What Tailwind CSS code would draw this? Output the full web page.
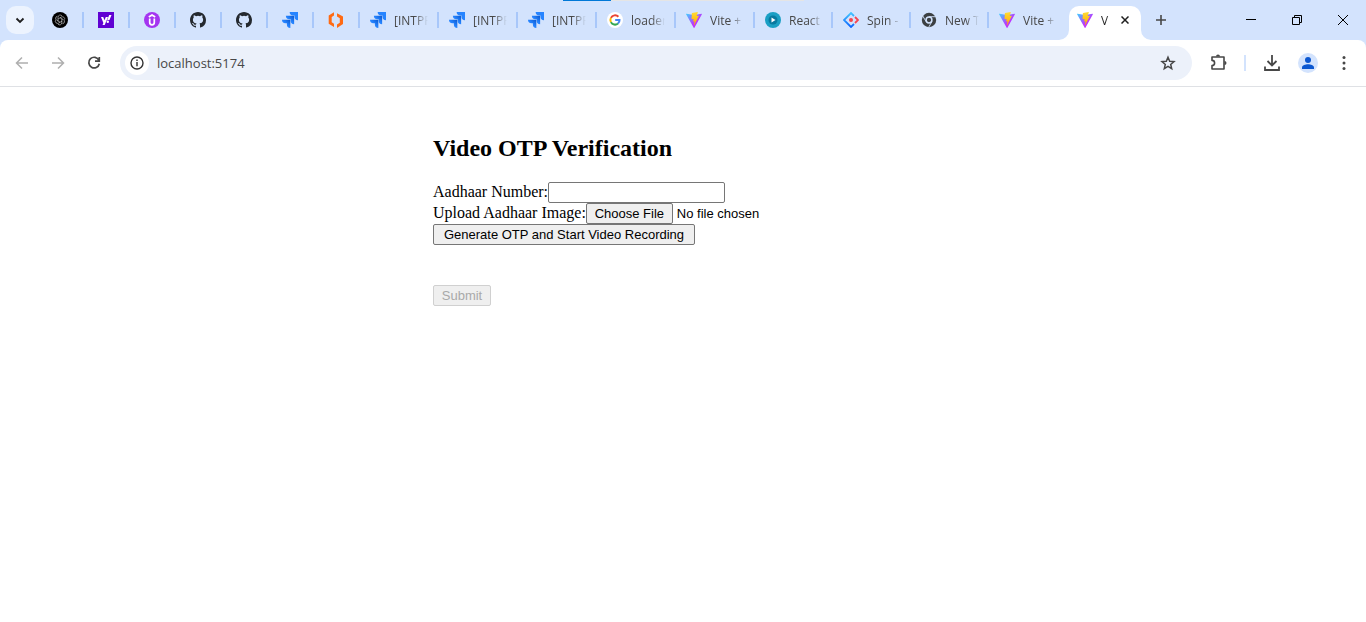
<!DOCTYPE html>
<html lang="en">
<head>
<meta charset="utf-8">
<meta name="viewport" content="width=device-width, initial-scale=1">
<title>Vite + React</title>
<script src="https://cdn.jsdelivr.net/npm/@tailwindcss/browser@4"></script>
</head>
<body class="min-h-screen bg-white font-['Liberation_Serif',serif] text-black">
<svg class="absolute size-0" aria-hidden="true">
  <defs>
    <linearGradient id="viteA" x1="0" y1="0" x2="1" y2="1"><stop offset="0" stop-color="#41d1ff"/><stop offset=".6" stop-color="#bd34fe"/></linearGradient>
    <linearGradient id="viteB" x1="0" y1="0" x2="0" y2="1"><stop offset="0" stop-color="#ffdd35"/><stop offset="1" stop-color="#ffa800"/></linearGradient>
    <linearGradient id="jiraA" x1="1" y1="0" x2="0" y2="1"><stop offset=".1" stop-color="#0f5fd6"/><stop offset=".5" stop-color="#2684ff"/></linearGradient>
    <linearGradient id="spinA" x1="0" y1="0" x2="0" y2="1"><stop offset="0" stop-color="#42c4ff"/><stop offset="1" stop-color="#0b63ff"/></linearGradient>
  </defs>
  <symbol id="vite" viewBox="0 0 256 257"><path fill="url(#viteA)" d="M255.200 38 134.900 252.900c-2.500 4.400-8.900 4.500-11.400 0L.9 38c-2.800-4.800 1.400-10.700 6.800-9.700l120.400 21.500q1.200.2 2.300 0l117.900-21.500c5.400-1 9.600 4.900 6.900 9.700Z"/><path fill="url(#viteB)" d="M185.400.1 96.400 17.500a3.300 3.300 0 0 0-2.600 3l-5.500 92.500a3.300 3.300 0 0 0 4 3.400l24.800-5.700a3.300 3.300 0 0 1 3.900 3.800l-7.300 36.100a3.300 3.300 0 0 0 4.100 3.800l15.400-4.700a3.300 3.300 0 0 1 4.100 3.800l-11.700 56.700c-.8 3.500 4 5.500 5.900 2.500l1.300-2 72.600-144.900a3.300 3.300 0 0 0-3.500-4.600l-25.500 4.900a3.300 3.300 0 0 1-3.800-4.100L189.200 4a3.300 3.300 0 0 0-3.800-3.900Z"/></symbol>
  <symbol id="jira" viewBox="0 0 24 24"><path fill="#2684ff" d="M11.500 0H24v12.500a5.200 5.200 0 0 1-5.200-5.200V5.200h-2.100A5.200 5.200 0 0 1 11.500 0Z"/><path fill="url(#jiraA)" d="M5.800 5.800h12.400v12.400a5.200 5.200 0 0 1-5.200-5.200v-2h-2a5.200 5.200 0 0 1-5.200-5.200Z"/><path fill="url(#jiraA)" d="M0 11.500h12.500V24a5.200 5.200 0 0 1-5.200-5.200v-2.100H5.200A5.200 5.200 0 0 1 0 11.500Z"/></symbol>
  <symbol id="github" viewBox="0 0 16 16"><path fill="#24292f" d="M8 0C3.580 0 0 3.580 0 8c0 3.540 2.290 6.530 5.470 7.590.4.070.550-.170.550-.380 0-.190-.010-.820-.010-1.490-2.010.370-2.530-.490-2.690-.940-.090-.230-.480-.940-.820-1.130-.280-.150-.680-.520-.010-.530.630-.010 1.080.580 1.230.820.720 1.210 1.870.870 2.330.660.070-.520.280-.870.510-1.070-1.780-.2-3.640-.890-3.640-3.950 0-.870.310-1.590.820-2.150-.080-.2-.360-1.020.080-2.120 0 0 .670-.210 2.200.820a7.600 7.600 0 0 1 4 0c1.530-1.040 2.200-.820 2.200-.820.440 1.100.160 1.920.080 2.120.510.560.820 1.270.820 2.150 0 3.070-1.870 3.750-3.650 3.950.290.250.540.730.540 1.480 0 1.070-.010 1.930-.010 2.200 0 .210.150.460.550.380A8 8 0 0 0 16 8c0-4.420-3.580-8-8-8Z"/></symbol>
</svg>

<header class="font-['Open_Sans','Noto_Sans',sans-serif]">
  <div class="relative bg-[#d3e3fd]">
    <div class="absolute top-0 left-[563px] flex h-px w-[241px]"><span class="w-12 bg-[#0078d7]"></span><span class="flex-1 bg-[#e5e5e5]"></span></div>
    <div class="flex h-10 items-center pl-1.5 text-xs text-[#474747]">
      <button aria-label="Search tabs" class="mr-1 grid size-7 shrink-0 place-items-center rounded-[10px] bg-[#ecf3fe]">
        <svg class="size-3" viewBox="0 0 12 12" fill="none" stroke="#1f1f1f" stroke-width="1.800"><path d="m2.500 4.500 3.500 3.500 3.500-3.500"/></svg>
      </button>
      <nav aria-label="Tabs" class="flex h-full shrink-0 items-center">
        <a href="#" aria-label="ChatGPT" class="flex h-4 w-[46px] border-r-2 border-[#a8c7fa] pl-3.5">
          <svg class="size-4" viewBox="0 0 16 16"><circle cx="8" cy="8" r="8" fill="#000"/><g fill="none" stroke="#d8d8d8" stroke-width=".6"><g id="petal"><path d="M6 9.200V5.300a2.200 2.200 0 0 1 4-1.300M6.200 6.900l3.300-1.900a2.200 2.200 0 0 1 3.100 2.600"/></g><use href="#petal" transform="rotate(120 8 8)"/><use href="#petal" transform="rotate(240 8 8)"/></g></svg>
        </a>
        <a href="#" aria-label="Yahoo" class="flex h-4 w-[46px] border-r-2 border-[#a8c7fa] pl-3.5">
          <svg class="size-4" viewBox="0 0 16 16"><path fill="#6001d2" d="M0 0h16v16H0z"/><path fill="#fff" d="M3 5h2.200l1.300 3.300L7.800 5H10l-3.300 8H4.500l.9-2.100ZM11.200 3h2.300l-2 4.900H9.200Z"/><circle cx="9.800" cy="9.800" r="1.200" fill="#fff"/></svg>
        </a>
        <a href="#" aria-label="Udemy" class="flex h-4 w-[46px] border-r-2 border-[#a8c7fa] pl-3.5">
          <svg class="size-4" viewBox="0 0 16 16"><circle cx="8" cy="8" r="8" fill="#a435f0"/><path d="m4.800 5 3.200-2 3.200 2M5.700 6.500V10.500a2.300 2.300 0 0 0 4.600 0V6.500" fill="none" stroke="#fff" stroke-width="1.700"/></svg>
        </a>
        <a href="#" aria-label="GitHub" class="flex h-4 w-[46px] border-r-2 border-[#a8c7fa] pl-3.5"><svg class="size-4"><use href="#github"/></svg></a>
        <a href="#" aria-label="GitHub" class="flex h-4 w-[46px] border-r-2 border-[#a8c7fa] pl-3.5"><svg class="size-4"><use href="#github"/></svg></a>
        <a href="#" aria-label="Jira" class="flex h-4 w-[46px] border-r-2 border-[#a8c7fa] pl-3.5"><svg class="size-4"><use href="#jira"/></svg></a>
        <a href="#" aria-label="Workspace" class="flex h-4 w-[46px] border-r-2 border-[#a8c7fa] pl-3.5">
          <svg class="size-4" viewBox="0 0 16 16" fill="#ff6a13"><path d="M6 .2v3.300L3.700 5v5.200l2.300 1.500v3.300L.7 11.700V3.400ZM9 1.200l6 3.300v7.600L9 16v-3.400l2.800-1.900V6.300L9 4.600Z"/></svg>
        </a>
        <a href="#" class="flex h-4 w-[79px] items-center gap-2 border-r-2 border-[#a8c7fa] pl-2.5"><svg class="size-4 shrink-0"><use href="#jira"/></svg><span class="w-[34px] overflow-hidden mask-r-from-60% pt-0.5 whitespace-nowrap">[INTPR</span></a>
        <a href="#" class="flex h-4 w-[79px] items-center gap-2 border-r-2 border-[#a8c7fa] pl-2.5"><svg class="size-4 shrink-0"><use href="#jira"/></svg><span class="w-[34px] overflow-hidden mask-r-from-60% pt-0.5 whitespace-nowrap">[INTPR</span></a>
        <a href="#" class="flex h-4 w-[79px] items-center gap-2 border-r-2 border-[#a8c7fa] pl-2.5"><svg class="size-4 shrink-0"><use href="#jira"/></svg><span class="w-[34px] overflow-hidden mask-r-from-60% pt-0.5 whitespace-nowrap">[INTPR</span></a>
        <a href="#" class="flex h-4 w-[79px] items-center gap-2 border-r-2 border-[#a8c7fa] pl-2.5">
          <svg class="size-4 shrink-0" viewBox="0 0 16 16"><circle cx="8" cy="8" r="8" fill="#fff"/><g fill="none" stroke-width="2"><path stroke="#ea4335" d="M3.900 5.900A4.600 4.600 0 0 1 11.400 4.800"/><path stroke="#fbbc05" d="M3.900 10.100a4.600 4.600 0 0 1 0-4.200"/><path stroke="#34a853" d="M3.900 10.100a4.600 4.600 0 0 0 7.100 1.400"/><path stroke="#4285f4" d="M11 11.500A4.300 4.300 0 0 0 12.500 8H8.200"/></g></svg>
          <span class="w-[34px] overflow-hidden mask-r-from-60% pt-0.5 whitespace-nowrap">loader</span></a>
        <a href="#" class="flex h-4 w-[79px] items-center gap-2 border-r-2 border-[#a8c7fa] pl-2.5"><svg class="size-4 shrink-0"><use href="#vite"/></svg><span class="w-[34px] overflow-hidden mask-r-from-60% pt-0.5 whitespace-nowrap">Vite +</span></a>
        <a href="#" class="flex h-4 w-[78px] items-center gap-2 border-r-2 border-[#a8c7fa] pl-2.5">
          <svg class="size-4 shrink-0" viewBox="0 0 16 16"><circle cx="8" cy="8" r="8" fill="#1a9fc4"/><circle cx="8" cy="8" r="4.500" fill="#08799f"/><path fill="#fff" d="m6.500 5.500 4 2.500-4 2.500Z"/></svg>
          <span class="w-[34px] overflow-hidden mask-r-from-60% pt-0.5 whitespace-nowrap">React</span></a>
        <a href="#" class="flex h-4 w-[78px] items-center gap-2 border-r-2 border-[#a8c7fa] pl-2.5">
          <svg class="size-4 shrink-0" viewBox="0 0 16 16" fill="none" stroke-width="1.800"><path stroke="url(#spinA)" d="M11 4 8 1 1 8l7 7 3-3"/><path stroke="#f5454f" d="m12 5 3 3-3 3"/><circle cx="8" cy="8" r="2" fill="#f5454f" stroke="none"/></svg>
          <span class="w-[34px] overflow-hidden mask-r-from-60% pt-0.5 whitespace-nowrap">Spin -</span></a>
        <a href="#" class="flex h-4 w-[78px] items-center gap-2 border-r-2 border-[#a8c7fa] pl-2.5">
          <svg class="size-4 shrink-0" viewBox="0 0 16 16"><circle cx="8" cy="8" r="7.200" fill="#3c4043"/><circle cx="8" cy="8" r="2.900" fill="#3c4043" stroke="#d3e3fd" stroke-width="1.500"/><path fill="none" stroke="#d3e3fd" stroke-width=".9" d="M8 4.700h7M5.100 9.600 1.600 3.700M10.900 9.600 7.500 15.500"/></svg>
          <span class="w-[34px] overflow-hidden mask-r-from-60% pt-0.5 whitespace-nowrap">New T</span></a>
        <a href="#" class="flex h-4 w-[78px] items-center gap-2 border-r-2 border-[#a8c7fa] pl-2.5 last:border-0"><svg class="size-4 shrink-0"><use href="#vite"/></svg><span class="w-[34px] overflow-hidden mask-r-from-60% pt-0.5 whitespace-nowrap">Vite +</span></a>
      </nav>
      <div class="flex h-full items-end">
        <svg class="-ml-2 size-2.5 shrink-0" viewBox="0 0 10 10"><path fill="#fff" d="M10 0v10H0A10 10 0 0 0 10 0Z"/></svg>
        <div class="flex h-[34px] w-[72px] items-center rounded-t-[10px] bg-white pb-1.5 pl-2 text-[#1f1f1f]">
          <svg class="size-4 shrink-0"><use href="#vite"/></svg>
          <span class="ml-2 w-4 overflow-hidden mask-r-from-30% pt-0.5">V</span>
          <button aria-label="Close tab" class="grid size-4 place-items-center"><svg class="size-2" viewBox="0 0 8 8" stroke="#1f1f1f" stroke-width="1.500"><path d="m.5.5 7 7M7.500.5l-7 7"/></svg></button>
        </div>
        <svg class="size-2.5 shrink-0" viewBox="0 0 10 10"><path fill="#fff" d="M0 0v10h10A10 10 0 0 1 0 0Z"/></svg>
      </div>
      <button aria-label="New tab" class="grid size-5 shrink-0 place-items-center"><svg class="size-2.5" viewBox="0 0 10 10" stroke="#474747" stroke-width="1.600"><path d="M5 0v10M0 5h10"/></svg></button>
      <div class="ml-auto flex h-full shrink-0 text-black">
        <button aria-label="Minimize" class="grid w-[46px] place-items-center"><svg class="size-2.5" viewBox="0 0 10 10"><path d="M0 4h10v1H0z"/></svg></button>
        <button aria-label="Restore" class="grid w-[46px] place-items-center"><svg class="size-2.5" viewBox="0 0 10 10" fill="none" stroke="#000"><path d="M.5 2.500h7v7h-7zM2.500 2.500v-2h7v7h-2"/></svg></button>
        <button aria-label="Close" class="grid w-[46px] place-items-center"><svg class="size-2.5" viewBox="0 0 10 10" stroke="#000"><path d="m0 0 10 10M10 0 0 10"/></svg></button>
      </div>
    </div>
    <div class="flex h-[47px] items-center rounded-t-lg border-b border-[#dfe1e5] bg-white px-3.5">
      <button aria-label="Back" class="mr-5 size-4"><svg viewBox="0 0 16 16" fill="none" stroke="#afafaf" stroke-width="1.500"><path d="M14 8H3M8 2.500 2.500 8 8 13.500"/></svg></button>
      <button aria-label="Forward" class="mr-5 size-4"><svg viewBox="0 0 16 16" fill="none" stroke="#afafaf" stroke-width="1.500"><path d="M2 8h11M8 2.500 13.500 8 8 13.500"/></svg></button>
      <button aria-label="Reload" class="mr-[18px] size-4"><svg viewBox="0 0 16 16" fill="none" stroke="#474747" stroke-width="1.700"><path d="M12.900 5.300A5.300 5.300 0 1 0 13.300 8.700M13.300 2v4.200H9"/></svg></button>
      <div class="flex h-[34px] flex-1 items-center rounded-full bg-[#ecf1fa] pr-4 pl-[5px]">
        <button aria-label="Site information" class="grid size-6 place-items-center rounded-full bg-white"><svg class="size-3.5" viewBox="0 0 14 14" fill="none" stroke="#333" stroke-width="1.400"><circle cx="7" cy="7" r="6"/><path d="M7 6v4.200M7 3.500v1.400"/></svg></button>
        <input aria-label="Address" value="localhost:5174" class="ml-2 min-w-0 flex-1 bg-transparent pt-0.5 text-[13px] text-[#474747] outline-none">
        <button aria-label="Bookmark" class="size-4"><svg viewBox="0 0 16 16" fill="none" stroke="#474747" stroke-width="1.500"><path d="m8 2.200 1.700 4 4.300.4-3.300 2.800 1 4.200L8 11.400l-3.700 2.200 1-4.200L2 6.600l4.300-.4Z"/></svg></button>
      </div>
      <button aria-label="Extensions" class="ml-[18px] size-[18px]"><svg viewBox="0 0 18 18"><path fill="none" stroke="#474747" stroke-width="1.600" stroke-linejoin="round" d="M2 3h12v12H2v-3.400a2.600 2.600 0 0 0 0-5.200Z"/><path fill="#474747" d="M6 2.500a2 2 0 0 1 4 0ZM14.500 7a2 2 0 0 1 0 4Z"/></svg></button>
      <span class="ml-4 h-4 w-0.5 bg-[#d3e3fd]"></span>
      <button aria-label="Downloads" class="ml-[18px] size-4"><svg viewBox="0 0 16 16" fill="none" stroke="#474747" stroke-width="1.800"><path d="M8 0v10M3.500 6 8 10.500 12.500 6M1 11.500V15h14v-3.500"/></svg></button>
      <button aria-label="Profile" class="ml-[18px] grid size-5 place-items-center rounded-full bg-[#d3e3fd]"><svg class="size-3" viewBox="0 0 12 12" fill="#0b57d0"><circle cx="6" cy="3" r="3"/><path d="M0 12V10.300C0 8.300 3.500 7.200 6 7.200s6 1.100 6 3.100V12Z"/></svg></button>
      <button aria-label="Menu" class="ml-[18px] size-4"><svg viewBox="0 0 16 16" fill="#474747"><circle cx="8" cy="2.500" r="1.500"/><circle cx="8" cy="8" r="1.500"/><circle cx="8" cy="13.500" r="1.500"/></svg></button>
    </div>
  </div>
</header>

<main class="mx-auto max-w-[500px] pt-12">
  <h2 class="mb-5 text-2xl leading-[27px] font-bold">Video OTP Verification</h2>
  <form>
    <div class="flex h-[21px]">
      <label for="aadhaar" class="text-base leading-5">Aadhaar Number:</label>
      <input id="aadhaar" type="text" class="h-[21px] w-[177px] rounded-xs border border-[#767676] px-px font-['Liberation_Sans',sans-serif] text-[13px]">
    </div>
    <div class="flex h-[21px]">
      <label for="image" class="text-base leading-5">Upload Aadhaar Image:</label>
      <input id="image" type="file" class="h-[21px] font-['Liberation_Sans',sans-serif] text-[13px] leading-[19px] file:h-[21px] file:w-[87px] file:rounded-xs file:border file:border-solid file:border-[#767676] file:bg-[#efefef] file:text-center">
    </div>
    <button type="button" class="block h-[21px] w-[262px] rounded-xs border border-[#767676] bg-[#efefef] text-center font-['Liberation_Sans',sans-serif] text-[13px] leading-[19px]">Generate OTP and Start Video Recording</button>
    <button type="submit" disabled class="mt-10 block h-[21px] w-[58px] rounded-xs border border-[#d0d0d0] bg-[#efefef] text-center font-['Liberation_Sans',sans-serif] text-[13px] leading-[19px] text-[#a9a9a9]">Submit</button>
  </form>
</main>
</body>
</html>
